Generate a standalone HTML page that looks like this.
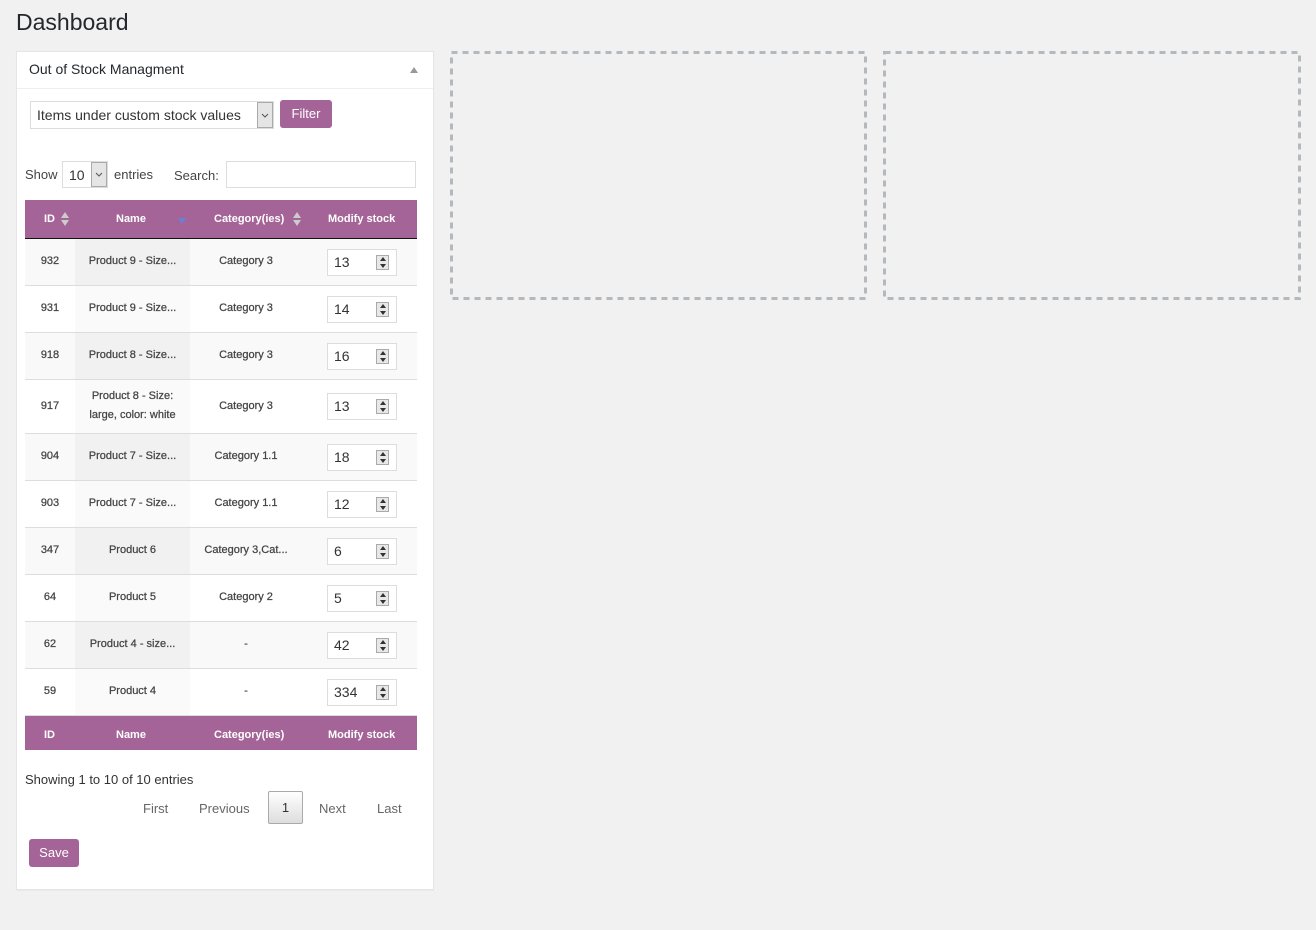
<!DOCTYPE html>
<html><head><meta charset="utf-8"><style>
*{box-sizing:border-box;margin:0;padding:0}
body{width:1316px;height:930px;background:#f1f1f1;font-family:"Liberation Sans",sans-serif;color:#444;position:relative;overflow:hidden}
.a{position:absolute}
h1{position:absolute;left:16px;top:9px;font-size:23px;font-weight:400;color:#23282d}
.panel{left:16px;top:51px;width:418px;height:839px;background:#fff;border:1px solid #e5e5e5;box-shadow:0 1px 1px rgba(0,0,0,.04)}
.btn{background:#a46497;color:#fff;border-radius:3px;font-size:13px;text-align:center}
.th{color:#fff;font-weight:700;font-size:11px;text-align:center}
.cell{font-size:11px;color:#444;text-align:center;display:flex;align-items:center;justify-content:center;line-height:19px;-webkit-text-stroke:0.25px #444}
.inp{border:1px solid #ddd;background:#fff;font-size:14px;color:#333;padding-left:6px;line-height:24px}
.spin{position:absolute;right:7px;top:5px;width:13px;height:15px;border:1px solid #aaa;background:#e8e8e8}
.spin:before{content:"";position:absolute;left:3px;top:1px;border:3px solid transparent;border-bottom:4px solid #333;border-top:0}
.spin:after{content:"";position:absolute;left:3px;top:8px;border:3px solid transparent;border-top:4px solid #333;border-bottom:0}
.sort{position:absolute;width:8px;height:14px}
.sort:before{content:"";position:absolute;left:0;top:0;border:4px solid transparent;border-bottom:6px solid #ccc;border-top:0}
.sort:after{content:"";position:absolute;left:0;top:8px;border:4px solid transparent;border-top:6px solid #ccc;border-bottom:0}
</style></head><body>
<h1>Dashboard</h1>
<svg class="a" style="left:0;top:0" width="1316" height="320"><g fill="none" stroke="#b4b9be" stroke-width="3" stroke-dasharray="6 5"><rect x="451.5" y="52.5" width="414" height="246"/><rect x="884.5" y="52.5" width="415" height="246"/></g></svg>
<div class="a panel"></div>
<div class="a" style="left:17px;top:88px;width:416px;height:1px;background:#eee"></div>
<div class="a" style="left:29px;top:61px;font-size:14px;color:#23282d">Out of Stock Managment</div>
<div class="a" style="left:410px;top:67px;border:4px solid transparent;border-bottom:6px solid #999;border-top:0"></div>
<div class="a" style="left:30px;top:101px;width:244px;height:28px;border:1px solid #ddd;font-size:14px;padding:5px 6px;color:#333">Items under custom stock values</div>
<div class="a" style="left:257px;top:102px;width:16px;height:26px;border:1px solid #aaa;background:#e5e5e5"><svg width="14" height="24"><path d="M4 11l3 3 3-3" fill="none" stroke="#555" stroke-width="1"/></svg></div>
<div class="a btn" style="left:280px;top:100px;width:52px;height:28px;line-height:28px">Filter</div>
<div class="a" style="left:25px;top:167px;font-size:13px">Show</div>
<div class="a" style="left:62px;top:161px;width:46px;height:27px;border:1px solid #ddd;font-size:14px;padding:5px 6px;color:#333">10</div>
<div class="a" style="left:91px;top:162px;width:16px;height:25px;border:1px solid #aaa;background:#e5e5e5"><svg width="14" height="23"><path d="M4 10l3 3 3-3" fill="none" stroke="#555" stroke-width="1"/></svg></div>
<div class="a" style="left:114px;top:167px;font-size:13px">entries</div>
<div class="a" style="left:174px;top:168px;font-size:13px">Search:</div>
<div class="a" style="left:226px;top:161px;width:190px;height:27px;border:1px solid #ddd"></div>
<div class="a" style="left:25px;top:200px;width:392px;height:38px;background:#a46497"></div>
<div class="a" style="left:25px;top:238px;width:392px;height:1px;background:#111"></div>
<div class="a th" style="left:44px;top:213px">ID</div>
<span class="sort" style="left:61px;top:212px"></span>
<div class="a th" style="left:116px;top:213px">Name</div>
<div class="a" style="left:178px;top:218px;border:4px solid transparent;border-top:6px solid #6b7fd7;border-bottom:0"></div>
<div class="a th" style="left:214px;top:213px">Category(ies)</div>
<span class="sort" style="left:293px;top:212px"></span>
<div class="a th" style="left:328px;top:213px">Modify stock</div>
<div id="rows"></div>
<div class="a" style="left:25px;top:716px;width:392px;height:34px;background:#a46497"></div>
<div class="a th" style="left:44px;top:729px">ID</div>
<div class="a th" style="left:116px;top:729px">Name</div>
<div class="a th" style="left:214px;top:729px">Category(ies)</div>
<div class="a th" style="left:328px;top:729px">Modify stock</div>
<div class="a" style="left:25px;top:772px;font-size:13px;color:#333">Showing 1 to 10 of 10 entries</div>
<div class="a" style="left:143px;top:801px;font-size:13px;color:#666">First</div>
<div class="a" style="left:199px;top:801px;font-size:13px;color:#666">Previous</div>
<div class="a" style="left:268px;top:791px;width:35px;height:33px;border:1px solid #aaa;border-radius:2px;background:linear-gradient(#fff,#ddd);font-size:13px;text-align:center;line-height:31px;color:#333">1</div>
<div class="a" style="left:319px;top:801px;font-size:13px;color:#666">Next</div>
<div class="a" style="left:377px;top:801px;font-size:13px;color:#666">Last</div>
<div class="a btn" style="left:29px;top:839px;width:50px;height:28px;line-height:28px">Save</div>
<script>
var d=[["932","Product 9 - Size...","Category 3","13",239,47],["931","Product 9 - Size...","Category 3","14",286,47],["918","Product 8 - Size...","Category 3","16",333,47],["917","Product 8 - Size:<br>large, color: white","Category 3","13",380,54],["904","Product 7 - Size...","Category 1.1","18",434,47],["903","Product 7 - Size...","Category 1.1","12",481,47],["347","Product 6","Category 3,Cat...","6",528,47],["64","Product 5","Category 2","5",575,47],["62","Product 4 - size...","-","42",622,47],["59","Product 4","-","334",669,47]];
var h="";d.forEach(function(r,i){var y=r[4],hh=r[5],odd=i%2==0;
h+='<div class="a" style="left:25px;top:'+y+'px;width:392px;height:'+hh+'px;background:'+(odd?'#f9f9f9':'#fff')+';border-bottom:1px solid #ddd"></div>';
h+='<div class="a" style="left:75px;top:'+y+'px;width:115px;height:'+(hh-1)+'px;background:'+(odd?'#f1f1f1':'#fafafa')+'"></div>';
h+='<div class="a cell" style="left:25px;top:'+(y-1)+'px;width:50px;height:'+hh+'px">'+r[0]+'</div>';
h+='<div class="a cell" style="left:75px;top:'+(y-1)+'px;width:115px;height:'+hh+'px">'+r[1]+'</div>';
h+='<div class="a cell" style="left:190px;top:'+(y-1)+'px;width:112px;height:'+hh+'px">'+r[2]+'</div>';
h+='<div class="a inp" style="left:327px;top:'+(y+Math.round(hh/2)-14)+'px;width:70px;height:27px">'+r[3]+'<span class="spin"></span></div>';});
document.getElementById("rows").outerHTML=h;
</script>
</body></html>
